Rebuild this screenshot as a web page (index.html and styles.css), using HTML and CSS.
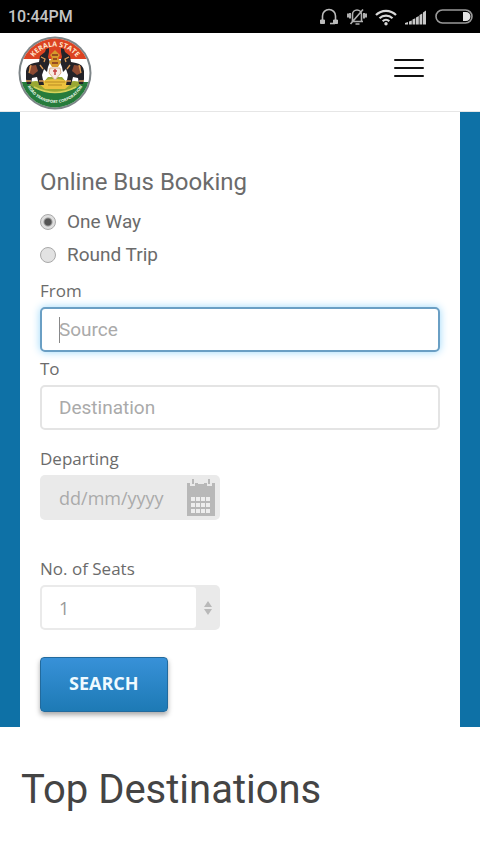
FILE: index.html
```html
<!DOCTYPE html>
<html lang="en">
<head>
<meta charset="utf-8">
<meta name="viewport" content="width=device-width, initial-scale=1">
<title>Online Bus Booking</title>
<link rel="stylesheet" href="styles.css">
</head>
<body>
<div class="status">
  <span class="clock">10:44PM</span>
  <div class="status-icons">
    <svg width="20" height="18" viewBox="0 0 20 18" fill="none" stroke="#bcbcbc" stroke-width="1.6"><path d="M3.500 13V8a6.300 6.300 0 0 1 13 0v5"/><path d="M1.500 12h4v3.500h-4zM14.500 12h4v3.500h-4z" fill="#bcbcbc" stroke-width="1"/><path d="M11 15.500h5"/></svg>
    <svg width="20" height="18" viewBox="0 0 20 18" fill="none" stroke="#b0b0b0" stroke-width="1.600"><path d="M4.500 13.500h11.500M5.500 13V6.500a4.500 4.500 0 0 1 9 0V13M8.500 16h4M3.500 16 16 1.500"/><path d="M1 5.500v4M3 5v5.500M17 5v5.500M19 5.500v4" stroke-width="2"/></svg>
    <svg width="22" height="18" viewBox="0 0 22 18" fill="none" stroke="#d8d8d8" stroke-width="2.200"><path d="M1 7a14 14 0 0 1 20 0M4.500 10.300a9.200 9.200 0 0 1 13 0M7.700 13.300a4.700 4.700 0 0 1 6.600 0"/><circle cx="11" cy="15.800" r="1.700" fill="#d8d8d8" stroke="none"/></svg>
    <svg width="22" height="18" viewBox="0 0 22 18" fill="#c8c8c8"><path d="M0 16.500V15l3-1v2.500zM4 13.500l2.800-1v4H4zM7.500 11.500l2.800-1.200v6.200H7.500zM11 9.500l2.800-1.500v8.500H11zM14.500 7l2.800-1.500v11h-2.800zM18 4.500 21 2.500v14h-3z"/></svg>
    <svg width="38" height="18" viewBox="0 0 38 18" fill="none" stroke="#999" stroke-width="1.600"><rect x="1" y="2" width="36" height="13" rx="6.500"/><path d="M28 4h3a4.500 4.500 0 0 1 0 9h-3z" fill="#e4e4e4" stroke="none"/></svg>
  </div>
</div>

<header class="header">
  <a class="logo" href="#" aria-label="Kerala State Road Transport Corporation">
    <svg width="76" height="76" viewBox="0 0 76 76">
      <defs>
        <clipPath id="disc"><circle cx="38" cy="38" r="34.500"/></clipPath>
        <path id="arc-top" d="M11.500 38a26.500 26.500 0 0 1 53 0"/>
        <path id="arc-bottom" d="M7 37a31 31 0 0 0 62 0"/>
      </defs>
      <circle cx="38" cy="38" r="36.500" fill="#7d8588"/>
      <g clip-path="url(#disc)">
        <path d="M0 0h76v76H0z" fill="#fff"/>
        <path d="M0 0h76v24H0z" fill="#dc4322"/>
        <path d="M0 47h76v29H0z" fill="#267b3b"/>
        <path d="M11 48q8-4 15 0l5-6h14l5 6q7-4 15 0l-6 5q-21 8-42 0z" fill="#9aa832"/>
        <path d="M21 48q17-8 34 0l-7 6H28z" fill="#edc23e"/>
        <path d="M28 47h20M31 50h14" stroke="#b98a22"/>
        <path d="M17 52q21 11 42 0" fill="none" stroke="#d6d35a" stroke-width="1.500"/>
        <g id="elephant">
          <path d="M9 47V36q1-7 8-8l5-1 1-6 5-4 1-3 3-1v4l-1 5 2 5-2 5-1 5-3-3-2 6 2 10h-5l-2-8-5 1-1 6h-4v-5l-1 5z" fill="#242328"/>
          <path d="M12 31l7-1 2 6-5 4-4-2z" fill="#8c4a33"/>
          <path d="M24 22l4 2-1 3M14 30l-2 8M9 46h5M22 46h5M23 30l3 4" fill="none" stroke="#dc9a55" stroke-width="1.300"/>
        </g>
        <use href="#elephant" transform="translate(76 0) scale(-1 1)"/>
        <path d="M33 20l5-5 5 5-2 3 3 4-3 5h-6l-3-5 3-4z" fill="#d69a2c"/>
        <path d="M35 20h6M36 24h4M35 28h6" stroke="#83351d" stroke-width="1.500"/>
        <path d="M33 33h10l1 5-6 7-6-7z" fill="#f7e9e2" stroke="#d9b18c"/>
        <path d="M38 34v6M36 36h4" stroke="#c63f3f" stroke-width="1.500"/>
        <text class="logo-top"><textPath href="#arc-top" startOffset="50%" text-anchor="middle">KERALA STATE</textPath></text>
        <text class="logo-bottom"><textPath href="#arc-bottom" startOffset="50%" text-anchor="middle">ROAD TRANSPORT CORPORATION</textPath></text>
      </g>
    </svg>
  </a>
  <button class="menu" type="button" aria-label="Menu"><span></span><span></span><span></span></button>
</header>

<main>
  <section class="booking">
    <form class="card">
      <h2>Online Bus Booking</h2>
      <label class="choice"><input type="radio" name="trip" checked>One Way</label>
      <label class="choice"><input type="radio" name="trip">Round Trip</label>
      <div class="field">
        <label for="from">From</label>
        <input class="box active" id="from" type="text" placeholder="Source">
      </div>
      <div class="field to">
        <label for="to">To</label>
        <input class="box" id="to" type="text" placeholder="Destination">
      </div>
      <div class="field departing">
        <label for="date">Departing</label>
        <div class="date">
          <input id="date" type="text" placeholder="dd/mm/yyyy">
          <svg width="30" height="38" viewBox="0 0 30 38"><path d="M1 4h28v33H1z" fill="#b8b8b8"/><path d="M4 1h5v6H4zM21 1h5v6h-5zM12 2h6v3h-6z" fill="#eaeaea"/><path d="M6 0h2v5H6zM22 0h2v5h-2z" fill="#b8b8b8"/><path d="M5 18h4v4H5zM10 18h4v4h-4zM15 18h4v4h-4zM20 18h4v4h-4zM5 24h4v4H5zM10 24h4v4h-4zM15 24h4v4h-4zM20 24h4v4h-4zM5 30h4v4H5zM10 30h4v4h-4zM15 30h4v4h-4zM20 30h4v4h-4z" fill="#eee"/></svg>
        </div>
      </div>
      <div class="field seats">
        <label for="seats">No. of Seats</label>
        <div class="select">
          <select id="seats"><option>1</option><option>2</option><option>3</option><option>4</option></select>
          <svg width="8" height="14" viewBox="0 0 8 14" fill="#b9b9b9"><path d="M4 0l4 6H0zM4 14l4-6H0z"/></svg>
        </div>
      </div>
      <button class="search" type="button">SEARCH</button>
    </form>
  </section>
  <h1>Top Destinations</h1>
</main>
</body>
</html>
```
FILE: styles.css
```css
* { box-sizing: border-box; }

body {
  margin: 0;
  background: #fff;
  color: #6b6b6b;
  font-family: Roboto, sans-serif;
}

.status {
  display: flex;
  align-items: center;
  justify-content: space-between;
  height: 33px;
  padding: 0 7px 0 8px;
  background: #000;
}

.clock {
  color: #c4c4c4;
  font-size: 16px;
  font-weight: 500;
}

.status-icons {
  display: flex;
  align-items: center;
  gap: 8px;
}

.header {
  display: flex;
  align-items: center;
  justify-content: space-between;
  height: 79px;
  padding: 2px 56px 0 17px;
  border-bottom: 1px solid #e6e6e6;
}

.logo,
.logo svg { display: block; }

.logo-top {
  fill: #ffe9cf;
  font: bold 7px "Open Sans", sans-serif;
}

.logo-bottom {
  fill: #f2faef;
  font: bold 4px "Open Sans", sans-serif;
}

.menu {
  display: grid;
  gap: 6px;
  width: 30px;
  padding: 0;
  margin-bottom: 10px;
  border: 0;
  background: none;
}

.menu span {
  height: 2px;
  border-radius: 1px;
  background: #111;
}

.booking {
  padding: 0 20px;
  background: #0e71a6;
}

.card {
  padding: 54px 20px 15px;
  background: #fff;
}

h2 {
  margin: 0 0 8px;
  font-size: 24px;
  font-weight: 400;
  line-height: 32px;
}

.choice {
  display: flex;
  align-items: center;
  gap: 11px;
  height: 33px;
  margin-top: -1px;
  font-size: 19px;
}

.choice + .choice { margin-top: 0; }

.choice input {
  appearance: none;
  width: 16px;
  height: 16px;
  margin: 0;
  border: 1px solid #a9a9a9;
  border-radius: 50%;
  background: #e2e2e2;
}

.choice input:checked {
  background: radial-gradient(circle, #555 3px, #dedede 5px);
}

.field label {
  display: block;
  height: 24px;
  margin-bottom: 4px;
  font-family: "Open Sans", sans-serif;
  font-size: 17px;
  line-height: 24px;
}

.field {
  margin-top: 8px;
}

.to { margin-top: 5px; }
.departing { margin-top: 17px; }
.seats { margin-top: 37px; }

.box {
  display: block;
  width: 100%;
  height: 45px;
  padding: 0 17px;
  border: 2px solid #e4e4e4;
  border-radius: 5px;
  outline: 0;
  background: #fff;
  color: #777;
  font: 19px Roboto, sans-serif;
}

::placeholder {
  color: #aaa;
  opacity: 1;
}

.active {
  border-color: #6a9fc4;
  background: linear-gradient(#888, #888) 17px 50% / 1px 26px no-repeat #fff;
  box-shadow: 0 0 9px #9bd8fa;
}

.date,
.select {
  display: flex;
  align-items: center;
  width: 180px;
  height: 45px;
  border-radius: 5px;
  background: #eaeaea;
}

.date {
  padding: 0 4px 0 19px;
}

.date input {
  flex: 1;
  min-width: 0;
  padding: 0;
  border: 0;
  outline: 0;
  background: none;
  font: 18px "Open Sans", sans-serif;
}

.select {
  padding: 2px 8px 2px 2px;
}

.select select {
  flex: 1;
  height: 100%;
  margin-right: 8px;
  padding: 0 17px;
  border: 0;
  border-radius: 3px;
  appearance: none;
  background: #fff;
  color: #999;
  font: 18px "Open Sans", sans-serif;
}

.search {
  display: block;
  height: 55px;
  margin-top: 27px;
  padding: 0 28px 4px;
  border: 1px solid #226a9d;
  border-radius: 4px;
  background: linear-gradient(#3891d8, #1d7ab5);
  box-shadow: 0 3px 5px #aaa;
  color: #effaff;
  font: bold 18px "Open Sans", sans-serif;
}

h1 {
  margin: 0;
  padding: 38px 21px 40px;
  color: #444;
  font-size: 40px;
  font-weight: 400;
  line-height: 49px;
}
```
